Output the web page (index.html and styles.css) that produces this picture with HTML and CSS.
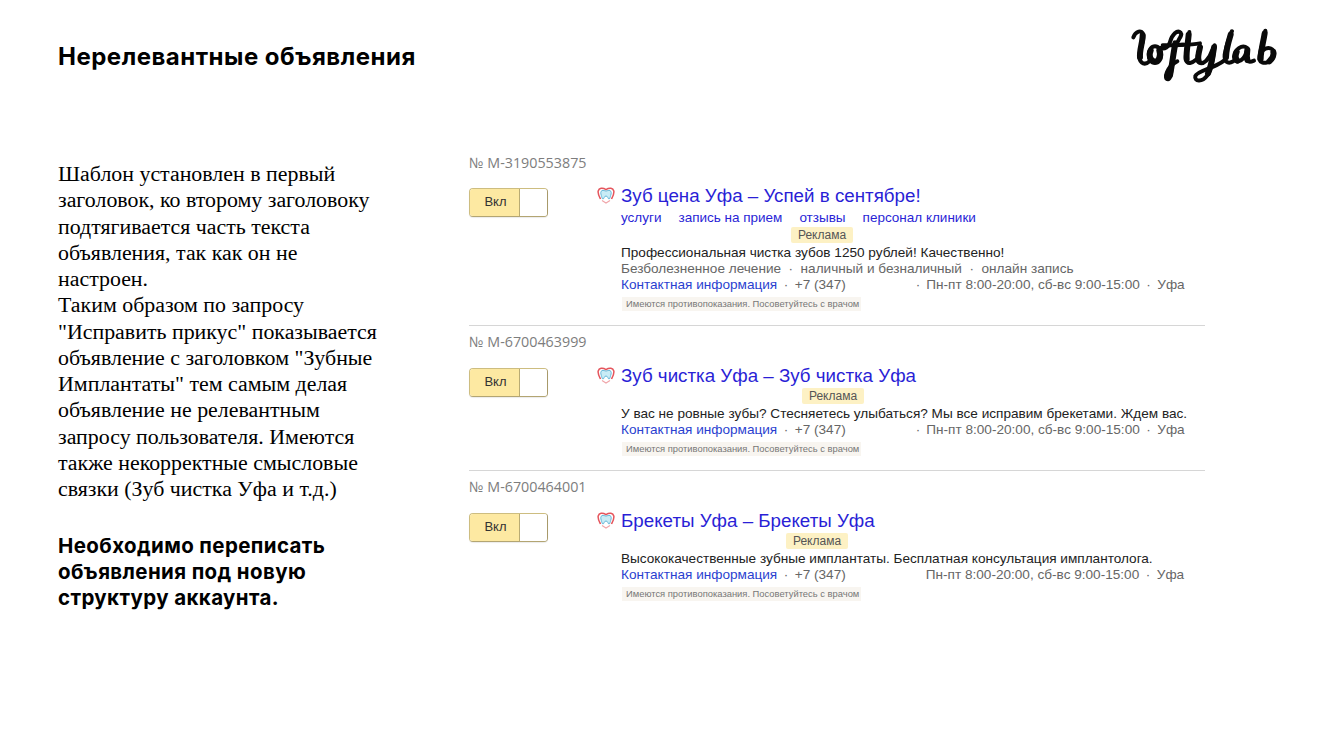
FILE: index.html
```html
<!DOCTYPE html>
<html lang="ru">
<head>
<meta charset="utf-8">
<title>Нерелевантные объявления</title>
<link rel="stylesheet" href="styles.css">
</head>
<body>
<svg width="0" height="0" class="defs">
  <defs>
    <symbol id="tooth" viewBox="0 0 18 18">
      <path d="M3.500 13C2 10 .6 7.500 1.200 5 2 2 5.500 1.400 9 3.600 12.500 1.400 16 2 16.800 5 17.400 7.500 16 10 14.500 13" fill="none" stroke="#e5555c" stroke-width="1.500"/>
      <path d="M5 4.500c1.500-.5 2.800.5 4 .5s2.500-1 4-.5c1.500.6 1.500 3 .7 5-.5 1.300-.7 3.500-1.700 3.500-1.200 0-1-3-3-3s-1.800 3-3 3c-1 0-1.200-2.200-1.700-3.500C3.500 7.500 3.500 5.100 5 4.500z" fill="#c9ecf6" stroke="#4aa8cf" stroke-width=".8"/>
      <path d="M5 14.500 9 17l4-2.500" fill="none" stroke="#f0a5a9" stroke-width="1.100"/>
    </symbol>
  </defs>
</svg>
<main class="slide">
  <header class="top">
    <h1 class="title">Нерелевантные объявления</h1>
    <svg class="logo" viewBox="0 0 510 210" role="img" aria-label="loftylab">
      <g fill="none" stroke="#0a0a0a" stroke-width="12" stroke-linecap="round" stroke-linejoin="round">
        <path d="M40 52C46 34 66 26 70 46 72 68 56 92 58 112 60 132 76 136 88 124"/>
        <ellipse cx="105" cy="104" rx="19" ry="25"/>
        <path d="M122 84C134 88 146 82 150 66 156 44 172 28 182 38 190 48 168 60 160 100 154 136 156 176 144 178 130 178 140 140 172 124"/>
        <path d="M128 76C150 76 170 76 190 74"/>
        <path d="M208 36C206 70 194 100 198 120 202 134 216 130 230 118"/>
        <path d="M182 74C200 74 222 74 240 70"/>
        <path d="M240 78C236 98 226 118 238 128 250 134 268 118 276 92"/>
        <path d="M284 76C280 110 276 146 262 166 246 188 222 184 226 168 232 152 282 146 312 122"/>
        <path d="M336 34C336 30 320 70 314 104 312 124 322 134 340 124"/>
        <path d="M382 84C366 72 344 88 342 110 342 130 366 132 380 96 376 116 378 132 402 122"/>
        <path d="M436 32C432 70 416 96 418 118 424 136 456 130 462 106 466 86 444 76 428 92"/>
      </g>
      <g fill="none" stroke="#0a0a0a" stroke-width="18" stroke-linecap="round">
        <path d="M68 46C68 68 58 90 60 112"/>
        <path d="M92 92C86 104 90 118 98 122"/>
        <path d="M118 92C122 104 118 118 112 122"/>
        <path d="M166 70C160 100 156 136 150 166"/>
        <path d="M206 44C204 70 198 96 200 118"/>
        <path d="M240 82C236 98 232 112 236 122"/>
        <path d="M282 82C278 110 274 140 264 160"/>
        <path d="M332 44C326 64 318 90 318 112"/>
        <path d="M350 96C346 106 346 116 352 122"/>
        <path d="M382 90C380 104 380 112 382 120"/>
        <path d="M434 40C430 66 422 94 422 116"/>
        <path d="M460 96C462 106 456 118 448 124"/>
      </g>
    </svg>
  </header>

  <div class="content">
    <section class="notes">
      <p class="copy">Шаблон установлен в первый<br>заголовок, ко второму заголовоку<br>подтягивается часть текста<br>объявления, так как он не<br>настроен.<br>Таким образом по запросу<br>"Исправить прикус" показывается<br>объявление с заголовком "Зубные<br>Имплантаты" тем самым делая<br>объявление не релевантным<br>запросу пользователя. Имеются<br>также некорректные смысловые<br>связки (Зуб чистка Уфа и т.д.)</p>
      <p class="lead">Необходимо переписать<br>объявления под новую<br>структуру аккаунта.</p>
    </section>

    <section class="ads">
      <article class="ad ad-first">
        <div class="ad-id">№ M-3190553875</div>
        <div class="ad-row">
          <div class="toggle"><span class="toggle-on">Вкл</span><span class="toggle-off"></span></div>
          <svg class="fav"><use href="#tooth"/></svg>
          <div class="ad-body">
            <a class="ad-title">Зуб цена Уфа – Успей в сентябре!</a>
            <div class="links"><a>услуги</a><a>запись на прием</a><a>отзывы</a><a>персонал клиники</a></div>
            <div class="badge badge-a">Реклама</div>
            <div class="line dark">Профессиональная чистка зубов 1250 рублей! Качественно!</div>
            <div class="line"><span>Безболезненное лечение</span><span class="sep sep-wide">·</span><span>наличный и безналичный</span><span class="sep sep-wide">·</span><span>онлайн запись</span></div>
            <div class="line"><a class="contact">Контактная информация</a><span class="sep">·</span>+7 (347)<span class="hours">·</span><span class="sep-after">Пн-пт 8:00-20:00, сб-вс 9:00-15:00</span><span class="sep">·</span>Уфа</div>
            <div class="warn">Имеются противопоказания. Посоветуйтесь с врачом</div>
          </div>
        </div>
      </article>

      <article class="ad">
        <div class="ad-id">№ M-6700463999</div>
        <div class="ad-row">
          <div class="toggle"><span class="toggle-on">Вкл</span><span class="toggle-off"></span></div>
          <svg class="fav"><use href="#tooth"/></svg>
          <div class="ad-body">
            <a class="ad-title">Зуб чистка Уфа – Зуб чистка Уфа</a>
            <div class="badge badge-b">Реклама</div>
            <div class="line dark">У вас не ровные зубы? Стесняетесь улыбаться? Мы все исправим брекетами. Ждем вас.</div>
            <div class="line"><a class="contact">Контактная информация</a><span class="sep">·</span>+7 (347)<span class="hours">·</span><span class="sep-after">Пн-пт 8:00-20:00, сб-вс 9:00-15:00</span><span class="sep">·</span>Уфа</div>
            <div class="warn">Имеются противопоказания. Посоветуйтесь с врачом</div>
          </div>
        </div>
      </article>

      <article class="ad ad-last">
        <div class="ad-id">№ M-6700464001</div>
        <div class="ad-row">
          <div class="toggle"><span class="toggle-on">Вкл</span><span class="toggle-off"></span></div>
          <svg class="fav"><use href="#tooth"/></svg>
          <div class="ad-body">
            <a class="ad-title">Брекеты Уфа – Брекеты Уфа</a>
            <div class="badge badge-c">Реклама</div>
            <div class="line dark">Высококачественные зубные имплантаты. Бесплатная консультация имплантолога.</div>
            <div class="line"><a class="contact">Контактная информация</a><span class="sep">·</span>+7 (347)<span class="hours-nodot">Пн-пт 8:00-20:00, сб-вс 9:00-15:00</span><span class="sep">·</span>Уфа</div>
            <div class="warn">Имеются противопоказания. Посоветуйтесь с врачом</div>
          </div>
        </div>
      </article>
    </section>
  </div>
</main>
</body>
</html>
```
FILE: styles.css
```css
* { box-sizing: border-box; }
html, body { margin: 0; padding: 0; background: #fff; }
body { width: 1323px; height: 745px; overflow: hidden; }
.defs { position: absolute; }
.slide { padding: 20px 33px 0 58px; }
.top { display: flex; justify-content: space-between; align-items: flex-start; height: 70px; }
.title { margin: 20px 0 0; font: 700 24px/34px "Inter", sans-serif; letter-spacing: .5px; color: #000; white-space: nowrap; }
.logo { width: 170px; height: 70px; display: block; }
.content { display: flex; margin-top: 60px; }
.notes { width: 411px; flex: none; padding-top: 11px; }
.copy { margin: 0; font: 21.900px/26.250px "Liberation Serif", serif; color: #000; white-space: nowrap; }
.lead { margin: 31px 0 0; font: 700 20.500px/26px "Inter", sans-serif; letter-spacing: .38px; color: #000; white-space: nowrap; }
.ads { width: 736px; flex: none; font-family: "Liberation Sans", sans-serif; }
.ad { border-bottom: 1px solid #d6d6d6; height: 145px; }
.ad-first { height: 176px; }
.ad-last { border-bottom: 0; }
.ad-id { font: 14.300px/18px "Open Sans", sans-serif; color: #7d7d7d; padding-top: 7px; height: 34px; }
.ad-first .ad-id { padding-top: 4px; height: 30px; }
.ad-row { display: flex; margin-top: 4px; }
.toggle { display: flex; width: 79px; height: 29px; flex: none; border: 1px solid #cdbd80; border-right-color: #a89a6a; border-bottom-color: #b3a572; border-radius: 4px; overflow: hidden; margin-top: 4px; box-shadow: 0 1px 1px rgba(0,0,0,.08); }
.toggle-on { width: 50px; padding-left: 2px; background: #fde9a2; font-size: 13px; line-height: 25px; text-align: center; color: #333; border-right: 1px solid #b9ab74; }
.toggle-off { flex: 1; background: #fff; }
.fav { width: 18px; height: 18px; margin: 2px 6px 0 49px; flex: none; }
.ad-body { flex: 1; min-width: 0; }
a { color: #2a1fd6; }
.ad-title { display: block; font-size: 18.750px; line-height: 24px; color: #2a1fd6; white-space: nowrap; }
.links { display: flex; gap: 17px; font-size: 13.500px; line-height: 16px; margin: 2px 0 1px; color: #3a1fc4; }
.badge { width: 62px; height: 16px; background: #fdf1c4; border-radius: 2px; font-size: 12px; line-height: 16px; text-align: center; color: #555; }
.badge-a { margin-left: 170px; }
.badge-b { margin-left: 181px; }
.badge-c { margin-left: 165px; }
.line { font-size: 13.600px; line-height: 16px; color: #666; white-space: nowrap; }
.line.dark { color: #222; padding-top: 2px; }
.contact { color: #2a3fd0; }
.sep { margin: 0 6.500px; }
.sep-wide { margin: 0 7.500px; }
.hours { margin-left: 70px; }
.sep-after { margin-left: 6px; }
.hours-nodot { margin-left: 80px; }
.warn { display: inline-block; margin: 4px 0 0 1px; padding: 0 2px 0 4px; height: 14px; background: #f8f5f0; font-size: 9.400px; line-height: 14px; color: #777; white-space: nowrap; }
```
